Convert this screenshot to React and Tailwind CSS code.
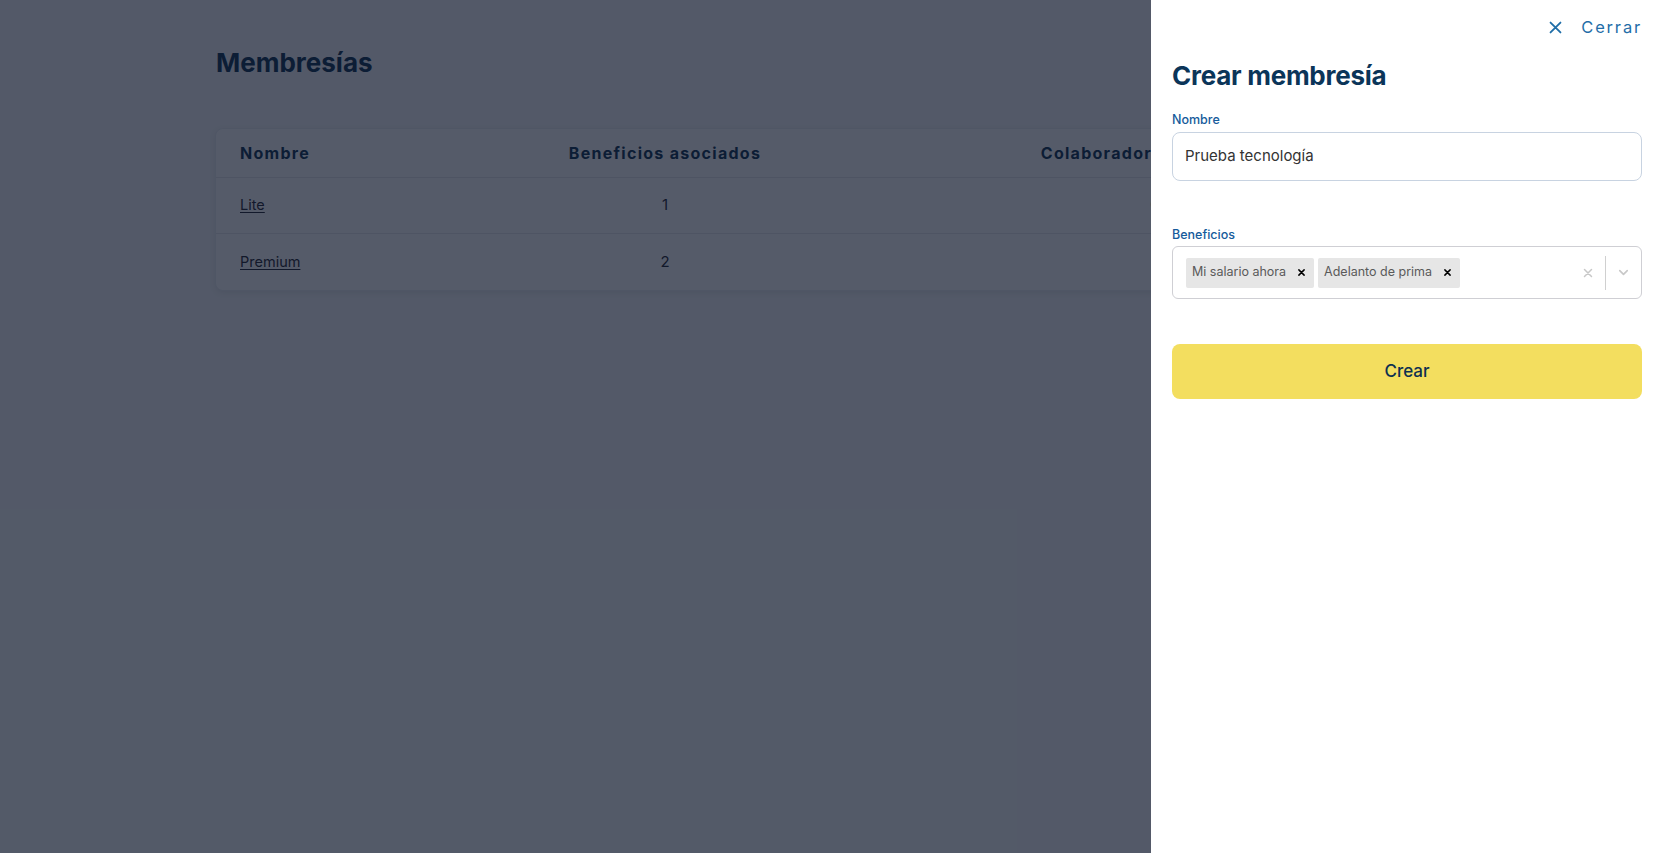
import React from "react";

const font = { fontFamily: "Inter, 'Noto Sans', sans-serif" };

const memberships = [
  { name: "Lite", benefits: 1, collaborators: 0 },
  { name: "Premium", benefits: 2, collaborators: 1 },
];

function XIcon({ className = "", strokeWidth = 2.5 }) {
  return (
    <svg viewBox="0 0 24 24" className={className} fill="none" stroke="currentColor" strokeWidth={strokeWidth} strokeLinecap="round">
      <path d="M5 5l14 14M19 5L5 19" />
    </svg>
  );
}

function MembershipTable() {
  return (
    <div className="mt-[49px] w-[1231px] rounded-lg bg-white shadow-[0_2px_6px_rgba(0,0,0,0.08)] border border-[#eceef2]">
      {/* header */}
      <div className="grid grid-cols-[204px_490px_490px_1fr] h-[49px] items-center border-b border-[#e6e8ec] text-[16px] font-bold tracking-[0.08em] text-[#0d3050]">
        <div className="pl-6">Nombre</div>
        <div className="text-center">Beneficios asociados</div>
        <div className="text-center">Colaboradores asociados</div>
        <div className="text-center pr-4">Acciones</div>
      </div>
      {memberships.map((m, i) => (
        <div
          key={m.name}
          className={`grid grid-cols-[204px_490px_490px_1fr] h-[56px] items-center text-[15px] text-[#1f2430] ${
            i < memberships.length - 1 ? "border-b border-[#e6e8ec]" : ""
          }`}
        >
          <div className="pl-6">
            <span className="underline underline-offset-2 text-[14.5px]">{m.name}</span>
          </div>
          <div className="text-center">{m.benefits}</div>
          <div className="text-center">{m.collaborators}</div>
          <div />
        </div>
      ))}
    </div>
  );
}

function Chip({ label }) {
  return (
    <div className="flex items-center h-[30px] bg-[#e6e6e6] rounded-[2px] pl-[6px] pr-[8px] gap-[11px]">
      <span className="text-[12.5px] text-[#5a5a5a]">{label}</span>
      <XIcon className="w-[9px] h-[9px] text-black" strokeWidth={4} />
    </div>
  );
}

function Drawer() {
  return (
    <div className="absolute top-0 right-0 h-full w-[511px] bg-white pl-[21px] pr-[20px]">
      <div className="flex justify-end items-center h-[56px] pb-[1px]">
        <button className="flex items-center gap-[17px] text-[#1f6ea8]">
          <XIcon className="w-[17px] h-[17px]" strokeWidth={2.6} />
          <span className="text-[16.5px] tracking-[0.11em]">Cerrar</span>
        </button>
      </div>
      <h2 className="mt-[4px] text-[26px] leading-[32px] font-bold text-[#0b3559] tracking-[-0.01em]">Crear membresía</h2>

      <label className="block mt-[20px] text-[12.5px] leading-[16px] font-medium text-[#165b9b]">Nombre</label>
      <div className="mt-[4px] h-[49px] rounded-lg border border-[#c8d3e1] flex items-center px-3 text-[15px] text-[#333]">
        Prueba tecnología
      </div>

      <label className="block mt-[46px] text-[12.5px] leading-[16px] font-medium text-[#165b9b]">Beneficios</label>
      <div className="mt-[3px] h-[53px] rounded-md border border-[#cfcfd4] flex items-center pl-[13px] pr-[10px]">
        <div className="flex-1 flex gap-[4px]">
          <Chip label="Mi salario ahora" />
          <Chip label="Adelanto de prima" />
        </div>
        <div className="flex items-center">
          <XIcon className="w-[12px] h-[12px] text-[#c8c8c8] mr-[11px]" strokeWidth={3} />
          <div className="w-px h-[34px] bg-[#d0d0d0]" />
          <svg viewBox="0 0 24 24" className="w-[15px] h-[15px] ml-[10px] text-[#c8c8c8]" fill="none" stroke="currentColor" strokeWidth={2.6} strokeLinecap="round" strokeLinejoin="round">
            <path d="M6 9l6 6 6-6" />
          </svg>
        </div>
      </div>

      <button className="mt-[45px] w-full h-[55px] rounded-lg bg-[#f3de5f] text-[17px] font-medium text-[#0d3050]">
        Crear
      </button>
    </div>
  );
}

export default function App() {
  return (
    <div className="relative w-full h-[853px] overflow-hidden bg-[#f7f8fa]" style={font}>
      {/* page behind the drawer */}
      <div className="pl-[215px] pt-[47px]">
        <h1 className="text-[26px] leading-[32px] font-bold text-[#0d3050] pl-[1px]">Membresías</h1>
        <MembershipTable />
      </div>

      {/* dim overlay */}
      <div className="absolute inset-0 bg-[#0d162a]/70" />

      <Drawer />
    </div>
  );
}
